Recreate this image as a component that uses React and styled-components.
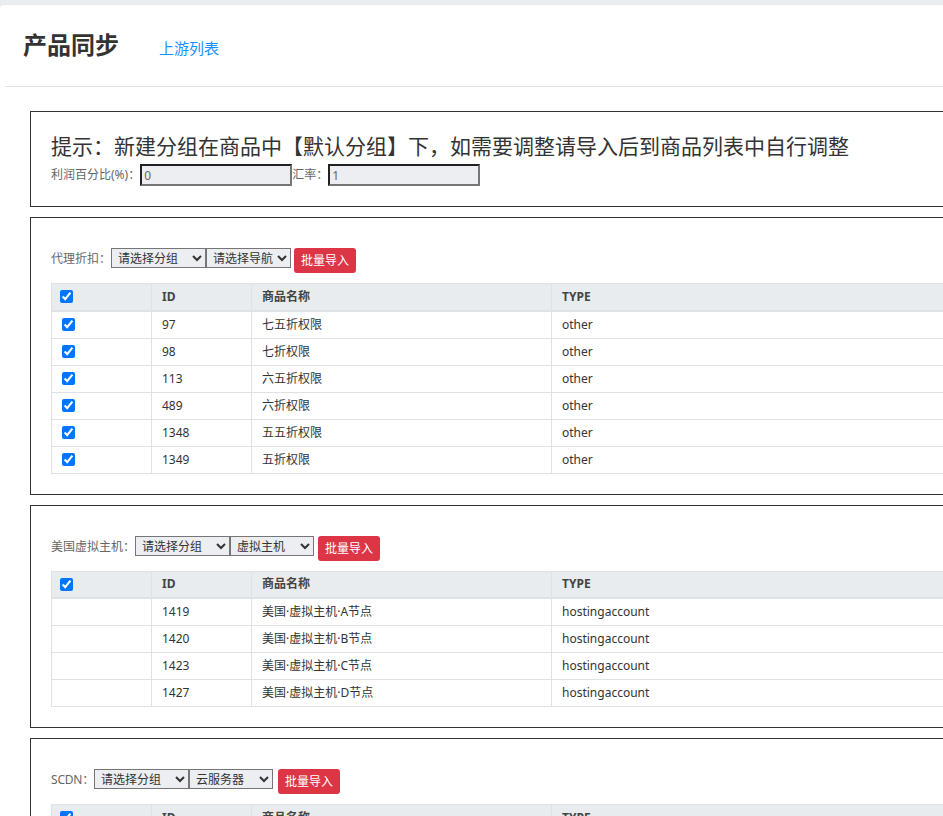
import React from "react";
import styled, { createGlobalStyle } from "styled-components";

const Global = createGlobalStyle`
  html, body { margin: 0; padding: 0; }
  body {
    background: #e9ecef;
    overflow: hidden;
    font-family: "Noto Sans", "Noto Sans CJK SC", sans-serif;
    color: #333;
  }
`;

const Page = styled.div`
  width: 1400px;
  padding-top: 5px;
`;

const Card = styled.div`
  background: #fff;
  border-radius: 4px 0 0 0;
  min-height: 900px;
`;

const Header = styled.div`
  margin: 0 0 0 5px;
  height: 81px;
  border-bottom: 1px solid #dee2e6;
  display: flex;
  align-items: baseline;
  padding: 0 0 0 18px;
  box-sizing: content-box;
  line-height: 80px;
`;

const Title = styled.h1`
  margin: 0;
  font-size: 24px;
  font-weight: 700;
  color: #333;
`;

const NavLink = styled.a`
  margin-left: 40px;
  font-size: 15px;
  color: #1890ff;
  text-decoration: none;
`;

const Content = styled.div`
  padding: 24px 0 0 30px;
  display: flex;
  flex-direction: column;
  gap: 10px;
`;

const Box = styled.section`
  border: 1px solid #333;
  padding: ${(p) => p.$pad || "30px 20px 20px 20px"};
  background: #fff;
`;

const Tip = styled.h2`
  margin: 0;
  font-size: 21px;
  font-weight: 400;
  line-height: 32px;
  color: #333;
`;

const InputRow = styled.div`
  display: flex;
  align-items: center;
  margin-top: 2px;
  font-size: 12px;
  color: #555;
`;

const Label = styled.span`
  font-size: 12px;
  color: #666;
  line-height: 22px;
  margin-right: ${(p) => p.$gap || 0}px;
  letter-spacing: ${(p) => p.$ls || 0}px;
`;

const TextInput = styled.input`
  width: 152px;
  height: 22px;
  box-sizing: border-box;
  border: 2px inset #767676;
  background: #eceef2;
  font-family: inherit;
  font-size: 12px;
  color: #666;
  padding: 0 2px;
  margin: 0;
  outline: none;
`;

const FilterRow = styled.div`
  display: flex;
  align-items: flex-start;
  margin-bottom: 10px;
`;

const Select = styled.select`
  width: ${(p) => p.$w}px;
  height: 20px;
  box-sizing: border-box;
  border: 1px solid #767676;
  border-radius: 0;
  background-color: #eceef2;
  font-family: inherit;
  font-size: 12px;
  color: #333;
  margin: 0;
  padding: 0 0 0 2px;
`;

const ImportButton = styled.button`
  margin-left: ${(p) => p.$gap || 4}px;
  height: 25px;
  padding: 0 7px;
  border: none;
  border-radius: 3px;
  background: #dc3545;
  color: #fff;
  font-family: inherit;
  font-size: 12px;
  line-height: 25px;
  cursor: pointer;
`;

const Table = styled.table`
  width: 100%;
  border-collapse: collapse;
  font-size: 12px;
  table-layout: fixed;
`;

const Th = styled.th`
  text-align: left;
  font-weight: 700;
  color: #444;
  background: #e9ecef;
  border: 1px solid #dee2e6;
  border-bottom-width: 2px;
  height: 27px;
  padding: 0 ${(p) => (p.$check ? "0 0 8px" : "10px")};
  line-height: 18px;
  width: ${(p) => (p.$w ? `${p.$w}px` : "auto")};
  box-sizing: border-box;
`;

const Td = styled.td`
  border: 1px solid #dee2e6;
  height: 26px;
  padding: ${(p) => (p.$check ? "0 0 0 10px" : "0 10px")};
  line-height: 18px;
  color: #333;
  vertical-align: middle;
`;

const Check = styled.input.attrs({ type: "checkbox" })`
  margin: 0;
  width: 13px;
  height: 13px;
  display: block;
`;

const sections = [
  {
    label: "代理折扣：",
    nav: "请选择导航",
    navW: 85,
    btnGap: 3,
    rowCheck: true,
    rows: [
      ["97", "七五折权限", "other"],
      ["98", "七折权限", "other"],
      ["113", "六五折权限", "other"],
      ["489", "六折权限", "other"],
      ["1348", "五五折权限", "other"],
      ["1349", "五折权限", "other"],
    ],
  },
  {
    label: "美国虚拟主机：",
    nav: "虚拟主机",
    navW: 84,
    btnGap: 4,
    rowCheck: false,
    rows: [
      ["1419", "美国·虚拟主机·A节点", "hostingaccount"],
      ["1420", "美国·虚拟主机·B节点", "hostingaccount"],
      ["1423", "美国·虚拟主机·C节点", "hostingaccount"],
      ["1427", "美国·虚拟主机·D节点", "hostingaccount"],
    ],
  },
  {
    label: "SCDN：",
    nav: "云服务器",
    navW: 84,
    btnGap: 5,
    rowCheck: false,
    ls: -0.2,
    rows: [
      ["1501", "SCDN·基础版", "cloud"],
      ["1502", "SCDN·高级版", "cloud"],
    ],
  },
];

function ProductSection({ s }) {
  return (
    <Box>
      <FilterRow>
        <Label $ls={s.ls}>{s.label}</Label>
        <Select $w={95} defaultValue="">
          <option value="">请选择分组</option>
        </Select>
        <Select $w={s.navW} defaultValue="">
          <option value="">{s.nav}</option>
        </Select>
        <ImportButton $gap={s.btnGap}>批量导入</ImportButton>
      </FilterRow>
      <Table>
        <thead>
          <tr>
            <Th $check $w={100}>
              <Check defaultChecked />
            </Th>
            <Th $w={100}>ID</Th>
            <Th $w={300}>商品名称</Th>
            <Th>TYPE</Th>
          </tr>
        </thead>
        <tbody>
          {s.rows.map((r) => (
            <tr key={r[0]}>
              <Td $check>{s.rowCheck && <Check defaultChecked />}</Td>
              <Td>{r[0]}</Td>
              <Td>{r[1]}</Td>
              <Td>{r[2]}</Td>
            </tr>
          ))}
        </tbody>
      </Table>
    </Box>
  );
}

export default function App() {
  return (
    <>
      <Global />
      <Page>
        <Card>
          <Header>
            <Title>产品同步</Title>
            <NavLink href="#">上游列表</NavLink>
          </Header>
          <Content>
            <Box $pad="18px 20px 20px 20px">
              <Tip>提示：新建分组在商品中【默认分组】下，如需要调整请导入后到商品列表中自行调整</Tip>
              <InputRow>
                <Label>利润百分比(%)：</Label>
                <TextInput defaultValue="0" />
                <Label>汇率：</Label>
                <TextInput defaultValue="1" />
              </InputRow>
            </Box>
            {sections.map((s) => (
              <ProductSection key={s.label} s={s} />
            ))}
          </Content>
        </Card>
      </Page>
    </>
  );
}
